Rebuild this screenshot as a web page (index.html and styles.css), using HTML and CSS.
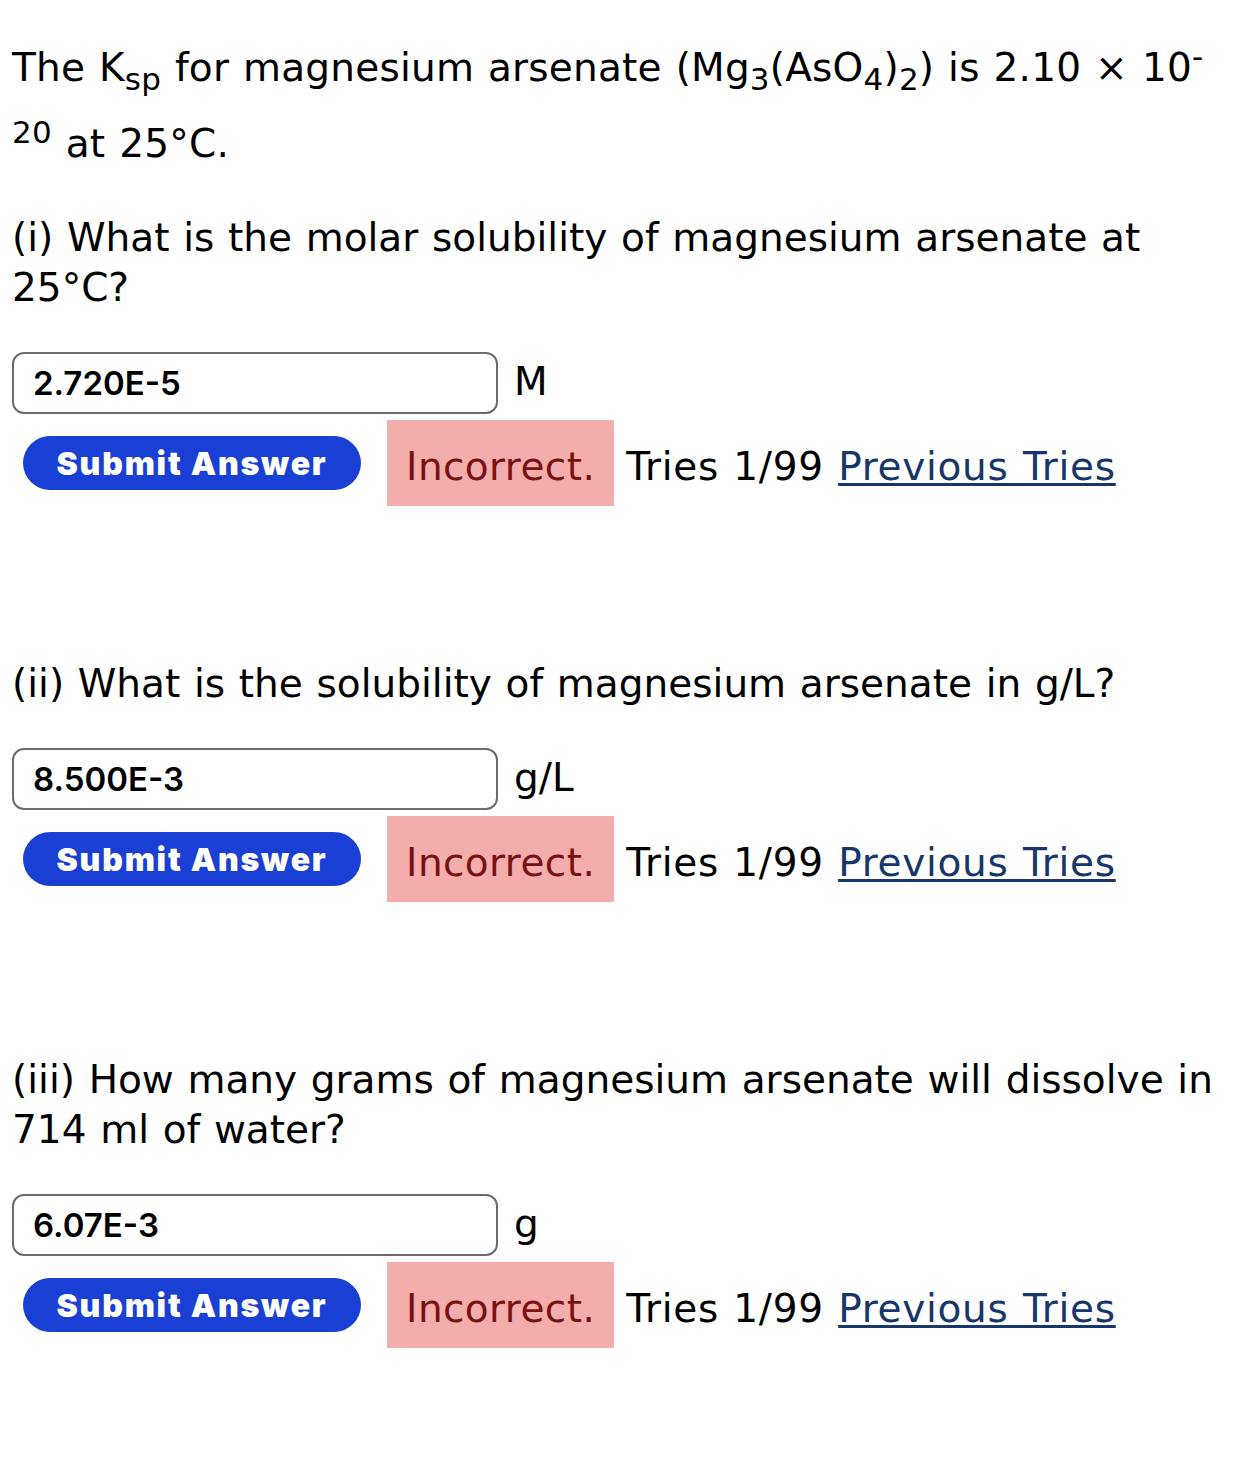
FILE: index.html
```html
<!DOCTYPE html>
<html>
<head>
<meta charset="utf-8">
<link rel="stylesheet" href="styles.css">
</head>
<body>
<div class="page">
  <p class="intro">The K<sub>sp</sub> for magnesium arsenate (Mg<sub>3</sub>(AsO<sub>4</sub>)<sub>2</sub>) is 2.10 × 10<sup>-</sup><br><sup>20</sup> at 25°C.</p>

  <div class="part">
    <p class="question">(i) What is the molar solubility of magnesium arsenate at 25°C?</p>
    <div class="answer-row">
      <span class="field">2.720E-5</span><span class="unit">M</span>
    </div>
    <div class="status-row">
      <button class="submit">Submit Answer</button>
      <span class="incorrect">Incorrect.</span>
      <span class="tries">Tries 1/99 <a href="#" class="prev">Previous Tries</a></span>
    </div>
  </div>

  <div class="part">
    <p class="question">(ii) What is the solubility of magnesium arsenate in g/L?</p>
    <div class="answer-row">
      <span class="field">8.500E-3</span><span class="unit">g/L</span>
    </div>
    <div class="status-row">
      <button class="submit">Submit Answer</button>
      <span class="incorrect">Incorrect.</span>
      <span class="tries">Tries 1/99 <a href="#" class="prev">Previous Tries</a></span>
    </div>
  </div>

  <div class="part">
    <p class="question">(iii) How many grams of magnesium arsenate will dissolve in 714 ml of water?</p>
    <div class="answer-row">
      <span class="field">6.07E-3</span><span class="unit">g</span>
    </div>
    <div class="status-row">
      <button class="submit">Submit Answer</button>
      <span class="incorrect">Incorrect.</span>
      <span class="tries">Tries 1/99 <a href="#" class="prev">Previous Tries</a></span>
    </div>
  </div>
</div>
</body>
</html>
```
FILE: styles.css
```css
html, body {
  margin: 0;
  padding: 0;
  background: #ffffff;
}

.page {
  padding: 0 12px;
  font-family: "DejaVu Sans", Verdana, sans-serif;
  font-size: 39px;
  word-spacing: 1.3px;
  color: #000000;
  line-height: 50px;
}

.intro {
  margin: 30px 0 0 0;
  line-height: 76px;
  letter-spacing: 0.2px;
}

.intro sub,
.intro sup {
  font-size: 31px;
  line-height: 0;
}

.question {
  margin: 0;
  line-height: 50px;
}

.part {
  margin-top: 31px;
}

.part + .part {
  margin-top: 153px;
}

.answer-row {
  margin-top: 39px;
  display: flex;
  align-items: baseline;
}

.field {
  display: inline-block;
  box-sizing: border-box;
  width: 486px;
  height: 62px;
  border: 2px solid #6b6a70;
  border-radius: 12px;
  padding: 0 19px;
  font-family: Inter, "Noto Sans", sans-serif;
  font-weight: 600;
  font-size: 33px;
  word-spacing: 0;
  line-height: 58px;
  color: #000000;
}

.unit {
  margin-left: 16px;
}

.status-row {
  margin-top: 6px;
  display: flex;
  align-items: center;
}

.submit {
  margin-left: 11px;
  height: 54px;
  width: 338px;
  border: none;
  border-radius: 27px;
  background: #1a3fd5;
  color: #ffffff;
  font-family: Inter, "Liberation Sans", sans-serif;
  font-weight: 900;
  font-size: 32px;
  letter-spacing: 1.8px;
  word-spacing: 0;
  padding: 0;
  cursor: pointer;
}

.incorrect {
  margin-left: 26px;
  height: 86px;
  box-sizing: border-box;
  padding: 7px 19px 0 19px;
  display: flex;
  align-items: center;
  background: #f3adad;
  color: #7a1111;
  letter-spacing: 0.4px;
}

.tries {
  margin-left: 12px;
  margin-top: 7px;
  letter-spacing: 0.7px;
}

.prev {
  color: #17366a;
  text-decoration: underline;
  text-decoration-thickness: 3px;
  text-underline-offset: 3px;
}
```
